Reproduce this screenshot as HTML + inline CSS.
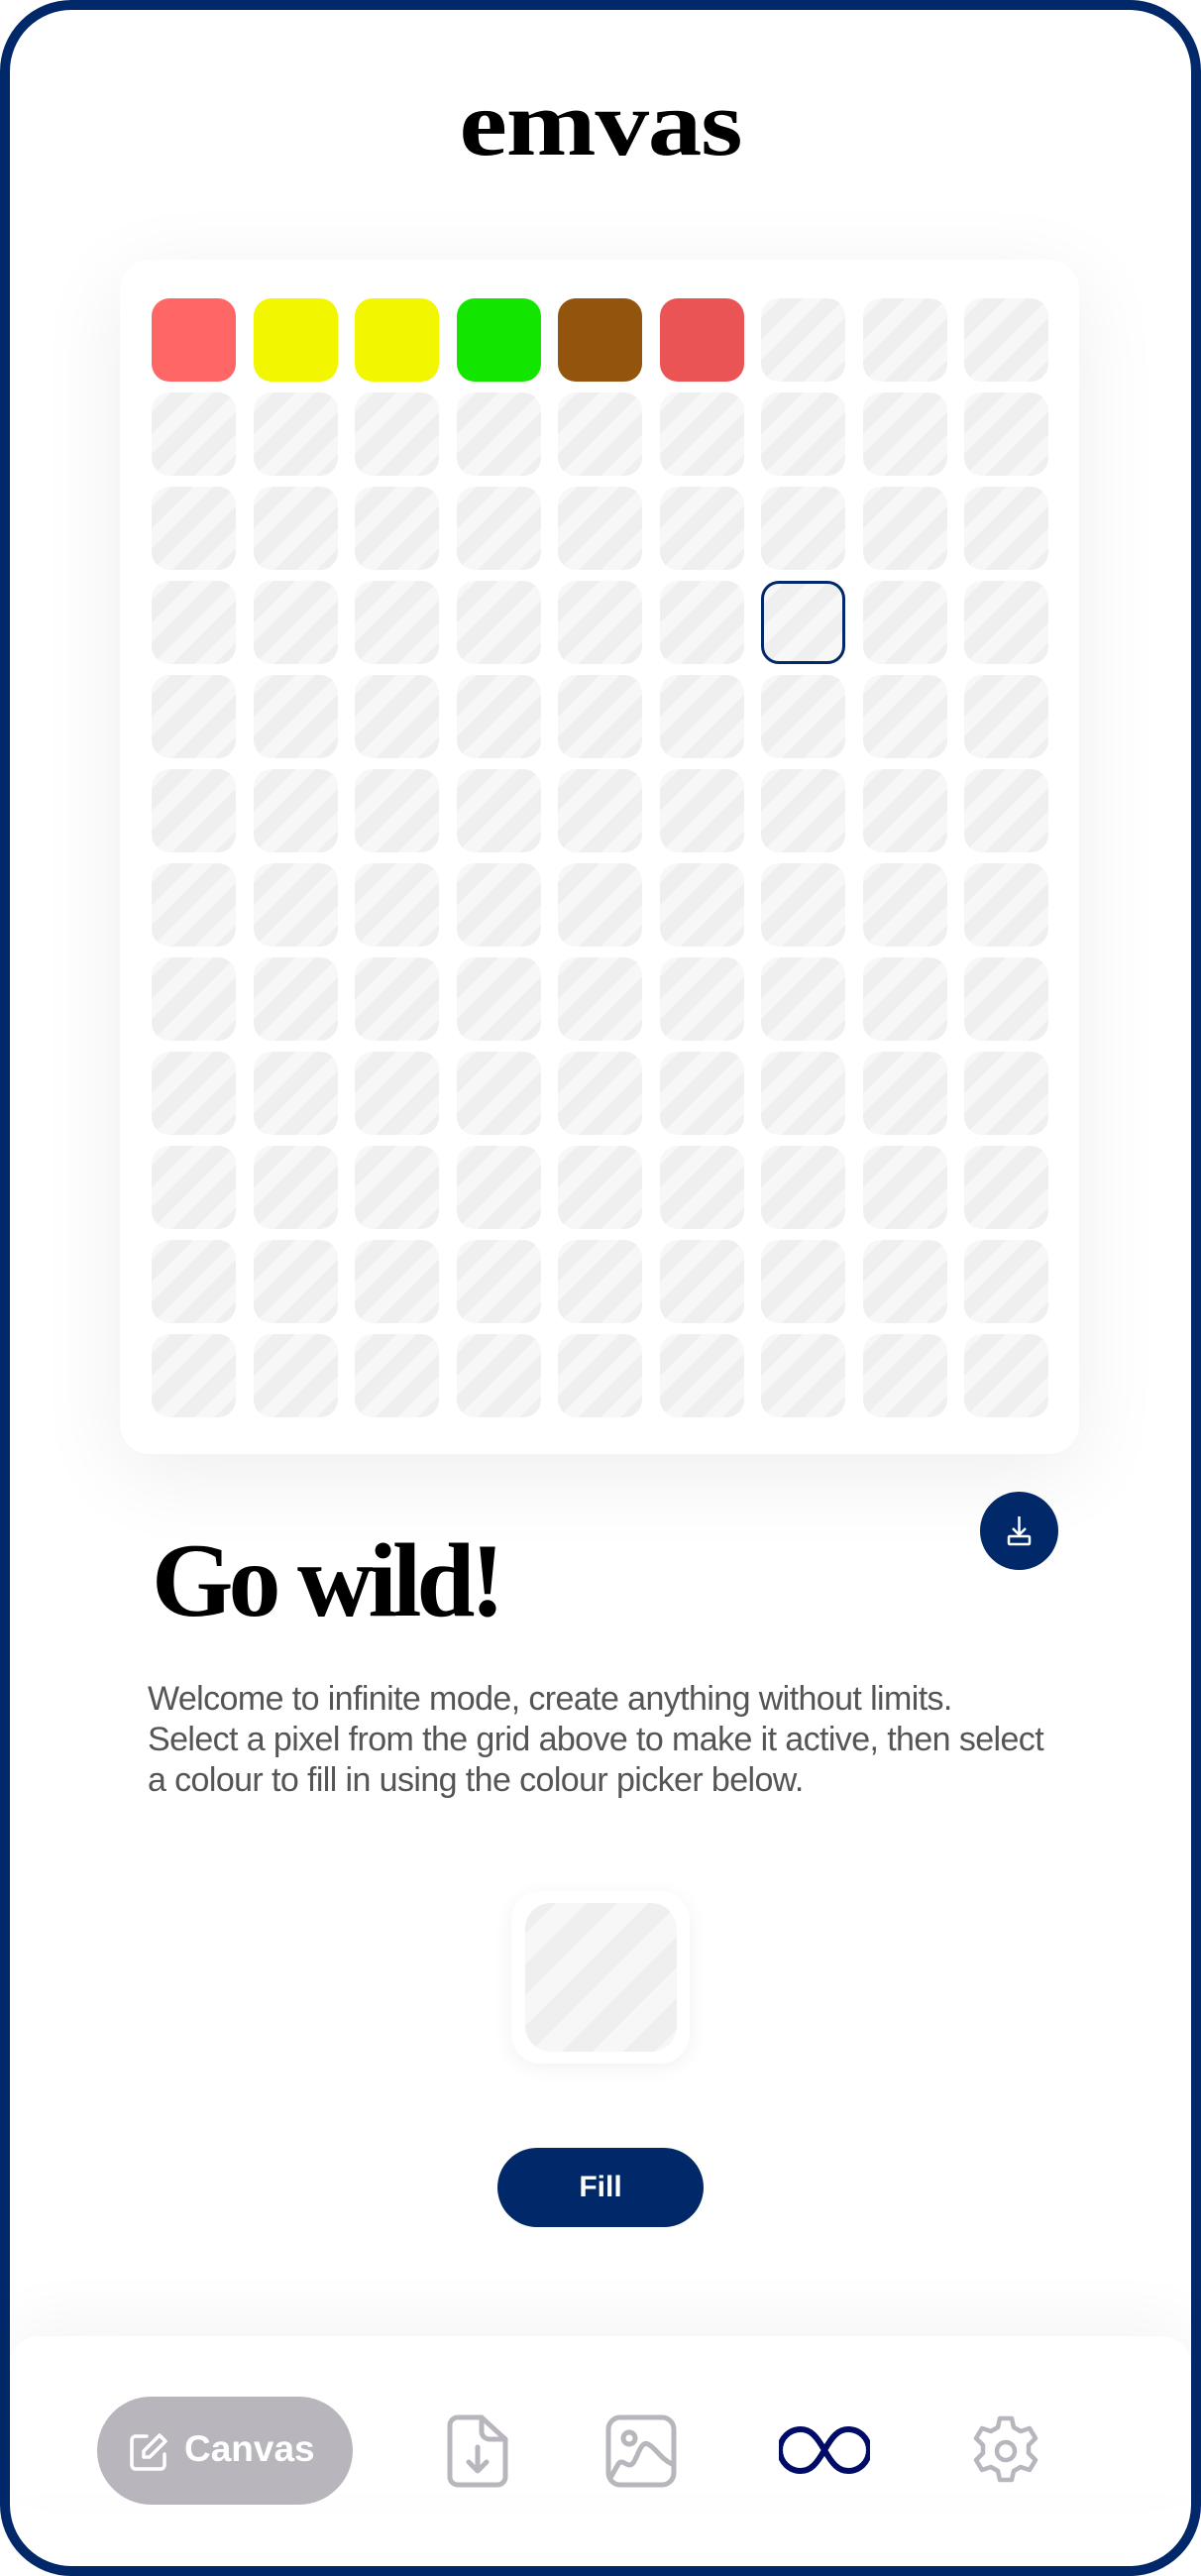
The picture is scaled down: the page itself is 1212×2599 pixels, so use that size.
<!DOCTYPE html>
<html><head><meta charset="utf-8">
<style>
html,body{margin:0;padding:0;background:#fff;}
body{width:1212px;height:2599px;position:relative;overflow:hidden;font-family:"Liberation Sans",sans-serif;}
.frame{position:absolute;left:0;top:0;width:1192px;height:2579px;border:10px solid #012868;border-radius:72px;overflow:hidden;background:#fff;}
.logo{position:absolute;left:0;width:1212px;top:78px;text-align:center;font-family:"Liberation Serif",serif;font-weight:bold;font-size:94px;letter-spacing:-1px;color:#000;line-height:1;transform:scaleX(1.16);}
.card{position:absolute;left:121px;top:262px;width:968px;height:1205px;background:#fff;border-radius:30px;box-shadow:0 20px 90px rgba(0,0,0,0.07);}
.cell{position:absolute;width:85px;height:84px;border-radius:18px;background:repeating-linear-gradient(135deg,#f7f7f7 0 14px,#efefef 14px 30px);box-sizing:border-box;}
.dl{position:absolute;left:989px;top:1505px;width:79px;height:79px;border-radius:50%;background:#012868;}
h1{position:absolute;left:153px;top:1542px;margin:0;font-family:"Liberation Serif",serif;font-weight:bold;font-size:106px;letter-spacing:-5px;line-height:1;color:#000;}
p{position:absolute;left:149px;top:1694px;width:910px;margin:0;font-size:34px;line-height:41px;color:#555;letter-spacing:-0.6px;}
.prev{position:absolute;left:516px;top:1908px;width:180px;height:174px;border-radius:30px;background:#fff;box-shadow:0 4px 20px rgba(0,0,0,0.06);}
.prev div{position:absolute;left:14px;top:12px;width:153px;height:150px;border-radius:26px;background:repeating-linear-gradient(135deg,#efefef 0 22px,#f7f7f7 22px 44px);}
.fill{position:absolute;left:502px;top:2167px;width:208px;height:80px;border-radius:40px;background:#012868;color:#fff;font-size:30px;font-weight:bold;text-align:center;line-height:80px;}
.nav{position:absolute;left:10px;top:2357px;width:1192px;height:160px;background:#fff;box-shadow:0 -20px 60px rgba(0,0,0,0.04);border-radius:30px 30px 0 0;}
.pill{position:absolute;left:98px;top:2418px;width:258px;height:109px;border-radius:55px;background:#b8b6bc;color:#fff;font-size:37px;font-weight:bold;}
</style></head><body>
<div class="frame"></div>
<div class="nav"></div>
<div class="logo">emvas</div>
<div class="card"></div>
<div id="grid"></div>
<div class="dl"><svg width="79" height="79" viewBox="0 0 79 79"><g fill="none" stroke="#fff" stroke-width="2.5"><path d="M39.5 25v18M33 37l6.5 6.5L46 37"/><rect x="29" y="45" width="21" height="8" rx="1"/></g></svg></div>
<h1>Go wild!</h1>
<p>Welcome to infinite mode, create anything without limits. Select a pixel from the grid above to make it active, then select a colour to fill in using the colour picker below.</p>
<div class="prev"><div></div></div>
<div class="fill">Fill</div>
<div class="pill">
<svg style="position:absolute;left:30px;top:34px" width="44" height="44" viewBox="0 0 44 44"><g fill="none" stroke="#fff" stroke-width="3.5" stroke-linecap="round" stroke-linejoin="round"><path d="M20 6H9a4 4 0 0 0-4 4v25a4 4 0 0 0 4 4h25a4 4 0 0 0 4-4V24"/><path d="M33 5l6 6-16 16h-6v-6z"/></g></svg>
<span style="position:absolute;left:88px;top:32px;">Canvas</span></div>
<svg style="position:absolute;left:448px;top:2436px" width="68" height="74" viewBox="0 0 68 74"><g fill="none" stroke="#b8b6bc" stroke-width="5" stroke-linecap="round" stroke-linejoin="round"><path d="M38 3H14a8 8 0 0 0-8 8v52a8 8 0 0 0 8 8h40a8 8 0 0 0 8-8V25z"/><path d="M38 3v14a8 8 0 0 0 8 8h16"/><path d="M34 33v24M25 48l9 9 9-9"/></g></svg>
<svg style="position:absolute;left:611px;top:2436px" width="72" height="74" viewBox="0 0 72 74"><g fill="none" stroke="#b8b6bc" stroke-width="5" stroke-linecap="round" stroke-linejoin="round"><rect x="3" y="3" width="66" height="68" rx="12"/><circle cx="24" cy="24" r="6"/><path d="M5 64l8-14c4-6 9 4 14 0s8-24 16-20 12 14 24 20"/></g></svg>
<svg style="position:absolute;left:786px;top:2446px" width="92" height="52" viewBox="0 0 92 52"><path d="M46 26C38 12 32 5 22 5a21 21 0 0 0 0 42c10 0 16-7 24-21s14-21 24-21a21 21 0 0 1 0 42c-10 0-16-7-24-21z" fill="none" stroke="#000c66" stroke-width="6"/></svg>
<svg style="position:absolute;left:978px;top:2436px" width="74" height="74" viewBox="0 0 74 74"><g fill="none" stroke="#b8b6bc" stroke-width="4.5" stroke-linejoin="round"><path d="M31 4h12l2 9 7 4 9-3 6 10-7 7v8l7 7-6 10-9-3-7 4-2 9H31l-2-9-7-4-9 3-6-10 7-7v-8l-7-7 6-10 9 3 7-4z"/><circle cx="37" cy="37" r="9"/></g></svg>
<script>
var cols=['#ff6666','#f2f700','#f2f700','#12e600','#93540e','#ea5455'];
var g=document.getElementById('grid'),h='';
for(var r=0;r<12;r++)for(var c=0;c<9;c++){
var x=153+c*102.5,y=301+r*95,st='left:'+x+'px;top:'+y+'px;';
if(r==0&&c<6)st+='background:'+cols[c]+';';
if(r==3&&c==6)st+='border:3px solid #012868;';
h+='<div class="cell" style="'+st+'"></div>';}
g.innerHTML=h;
</script>
</body></html>
